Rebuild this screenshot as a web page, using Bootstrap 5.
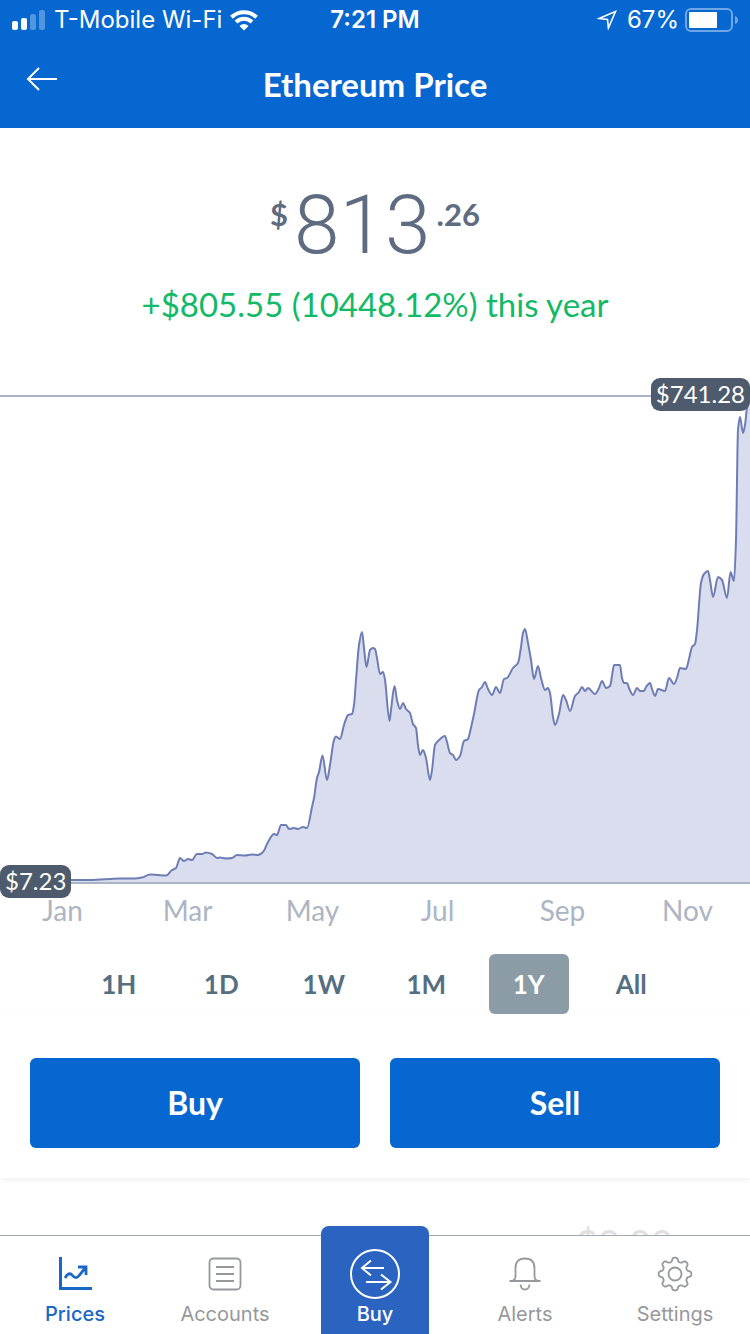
<!DOCTYPE html>
<html lang="en">
<head>
<meta charset="utf-8">
<meta name="viewport" content="width=device-width, initial-scale=1">
<title>Ethereum Price</title>
<link href="https://cdn.jsdelivr.net/npm/bootstrap@5.3.0/dist/css/bootstrap.min.css" rel="stylesheet">
<style>
  :root { --brand: #0667d0; --slate: #4e5b6c; --rule: #a9b4c6; }
  body { font-family: Lato, "Liberation Sans", sans-serif; background: #fff; }
  .ui-font { font-family: Inter, "Liberation Sans", sans-serif; }
  .app-header { background: var(--brand); color: #fff; }
  .status-bar { height: 40px; padding: 0 12px; font-size: 24px; line-height: 40px; }
  .status-side { flex: 1 1 0; gap: 8px; white-space: nowrap; }
  .status-right { gap: 6px; }
  .title-bar { height: 88px; padding: 0 24px; }
  .title-side { flex: 1 1 0; }
  .back-btn { color: #fff; width: 36px; height: 36px; margin-bottom: 10px; }
  .title-bar h1 { font-size: 33px; line-height: 40px; font-weight: 700; }
  .scroller { min-height: 0; overflow-y: auto; scrollbar-width: none; }
  .scroller::-webkit-scrollbar { display: none; }
  .quote { padding-top: 56px; color: #5f6b80; }
  .quote-row { gap: 6px; height: 84px; }
  .quote-main { font-family: Roboto, Lato, sans-serif; font-size: 82px; line-height: 82px; font-weight: 300; }
  .quote-minor { font-size: 31px; line-height: 60px; font-weight: 700; }
  .change { color: #12b966; font-size: 33px; line-height: 40px; margin-top: 16px; }
  .chart { margin-top: 71px; }
  .chart svg { width: 100%; height: 489px; }
  .price-tag { position: absolute; background: var(--slate); color: #fff; font-size: 24px; line-height: 31px; padding: 0 5px 2px; border-radius: 9px; }
  .tag-high { right: 0; top: -17px; }
  .tag-low { left: 0; bottom: -14px; }
  .months { color: #acb5c3; font-size: 28px; line-height: 40px; margin-top: 6px; }
  .ranges { gap: 23px; padding: 24px 79px 0; }
  .ranges .btn { --bs-btn-padding-x: 0; --bs-btn-padding-y: 10px; --bs-btn-color: #566f80; --bs-btn-active-bg: #8b9ca7; --bs-btn-active-color: #fff; --bs-btn-border-width: 0; --bs-btn-border-radius: 6px; font-size: 26px; line-height: 40px; font-weight: 700; flex: 1 1 0; }
  .trade { gap: 30px; padding: 44px 30px 30px; box-shadow: 0 2px 5px rgba(0,0,0,.06); }
  .trade .btn { --bs-btn-bg: var(--brand); --bs-btn-hover-bg: #0559b5; --bs-btn-color: #fff; --bs-btn-hover-color: #fff; --bs-btn-border-width: 0; --bs-btn-border-radius: 6px; --bs-btn-padding-y: 24px; font-size: 32px; line-height: 42px; font-weight: 700; }
  .balance { color: #e0e0e2; font-size: 38px; line-height: 46px; padding: 42px 77px 0; }
  .tabs { border-top: 1px solid #a5acb1; background: #fff; height: 99px; }
  .tabs a { flex: 1 1 0; color: #96989b; font-size: 20px; line-height: 26px; padding-top: 20px; gap: 9px; }
  .tabs a.current { color: #1a67c4; font-weight: 500; }
  .tabs .tab-trade { flex: 0 0 108px; margin: -10px 21px 0; padding-top: 23px; gap: 2px; color: #fff; background: #2b63c1; border-radius: 8px 8px 0 0; font-weight: 500; }
</style>
</head>
<body class="vh-100 d-flex flex-column overflow-hidden">

<header class="app-header flex-shrink-0">
  <div class="status-bar ui-font d-flex align-items-center">
    <div class="status-side d-flex align-items-center">
      <svg width="34" height="20" viewBox="0 0 34 20" fill="#fff" aria-hidden="true">
        <rect x="0" y="11" width="6" height="9" rx="2"/><rect x="9" y="8" width="6" height="12" rx="2"/>
        <rect x="18" y="4" width="6" height="16" rx="2" opacity=".3"/><rect x="27" y="0" width="6" height="20" rx="2" opacity=".3"/>
      </svg>
      <span>T-Mobile Wi-Fi</span>
      <svg width="28" height="21" viewBox="0 0 28 21" fill="none" stroke="#fff" stroke-width="4" aria-hidden="true">
        <path d="M1.500 7.300a18 18 0 0 1 25 0M6 12a11.500 11.500 0 0 1 16 0"/><path d="M14 20.500l-4.500-4.600a6.500 6.500 0 0 1 9 0z" fill="#fff" stroke="none"/>
      </svg>
    </div>
    <time class="fw-semibold">7:21 PM</time>
    <div class="status-side status-right d-flex align-items-center justify-content-end">
      <svg width="20" height="20" viewBox="0 0 20 20" fill="none" stroke="#fff" stroke-width="1.600" aria-hidden="true"><path d="M18.500 1.500L2 8.500l8.500.9.900 8.600z"/></svg>
      <span class="ms-1">67%</span>
      <svg width="53" height="24" viewBox="0 0 53 24" fill="none" aria-hidden="true">
        <rect x="1" y="1" width="46" height="22" rx="5" stroke="#6ea6e6" stroke-width="2"/><rect x="4" y="4" width="28" height="16" rx="1" fill="#fff"/><path d="M50 8v8q3-1 3-4t-3-4" fill="#6ea6e6"/>
      </svg>
    </div>
  </div>
  <div class="title-bar d-flex align-items-center">
    <div class="title-side">
      <button type="button" class="back-btn btn p-0 border-0 d-flex align-items-center" aria-label="Back">
        <svg width="36" height="26" viewBox="0 0 36 26" fill="none" stroke="currentColor" stroke-width="2"><path d="M33 13H4M15 2L4 13l11 11"/></svg>
      </button>
    </div>
    <h1 class="mb-0">Ethereum Price</h1>
    <div class="title-side"></div>
  </div>
</header>

<main class="scroller flex-grow-1">
  <section class="quote text-center">
    <div class="quote-row d-flex justify-content-center align-items-start">
      <span class="quote-minor">$</span><span class="quote-main">813</span><span class="quote-minor">.26</span>
    </div>
    <p class="change mb-0">+$805.55 (10448.12%) this year</p>
  </section>

  <section class="chart position-relative">
    <svg class="d-block" viewBox="0 395 750 489" preserveAspectRatio="none" role="img" aria-label="Price over one year">
      <path id="area" fill="#dadded"/>
      <path id="line" fill="none" stroke="#6f7db5" stroke-width="2" stroke-linejoin="round" vector-effect="non-scaling-stroke"/>
      <path d="M0 396H750M0 883H750" stroke="#a9b4c6" stroke-width="2"/>
    </svg>
    <span class="price-tag tag-high">$741.28</span>
    <span class="price-tag tag-low">$7.23</span>
  </section>
  <div class="months row row-cols-6 g-0 text-center">
    <span class="col">Jan</span><span class="col">Mar</span><span class="col">May</span><span class="col">Jul</span><span class="col">Sep</span><span class="col">Nov</span>
  </div>

  <div class="ranges d-flex" role="group" aria-label="Range">
    <button type="button" class="btn">1H</button>
    <button type="button" class="btn">1D</button>
    <button type="button" class="btn">1W</button>
    <button type="button" class="btn">1M</button>
    <button type="button" class="btn active" aria-pressed="true">1Y</button>
    <button type="button" class="btn">All</button>
  </div>
  <div class="trade d-flex">
    <button type="button" class="btn flex-fill w-50">Buy</button>
    <button type="button" class="btn flex-fill w-50">Sell</button>
  </div>
  <p class="balance text-end mb-0">$0.00</p>
</main>

<nav class="tabs ui-font d-flex flex-shrink-0 position-relative">
  <a href="#prices" class="current d-flex flex-column align-items-center text-decoration-none" aria-current="page">
    <svg width="36" height="36" viewBox="0 0 36 36" fill="none" stroke="currentColor" stroke-width="3" aria-hidden="true"><path d="M3.500 1v31.500H35"/><path d="M8 22q4-7 7.500-2.500t7-.500l6.500-8M21 11h8v8" stroke-width="2.800"/></svg>
    <span>Prices</span>
  </a>
  <a href="#accounts" class="d-flex flex-column align-items-center text-decoration-none">
    <svg width="36" height="36" viewBox="0 0 36 36" fill="none" stroke="currentColor" stroke-width="1.800" aria-hidden="true"><rect x="2.500" y="2.500" width="31" height="31" rx="4"/><path d="M9 11h18M9 18h18M9 25h18"/></svg>
    <span>Accounts</span>
  </a>
  <a href="#trade" class="tab-trade d-flex flex-column align-items-center text-decoration-none">
    <svg width="50" height="50" viewBox="0 0 50 50" fill="none" stroke="currentColor" stroke-width="2" aria-hidden="true"><circle cx="25" cy="25" r="24"/><path d="M34 19H12M21 11.500L12 19l9 7.500M16 33h24M31 25.500l9.500 7.500L31 40.500"/></svg>
    <span>Buy</span>
  </a>
  <a href="#alerts" class="d-flex flex-column align-items-center text-decoration-none">
    <svg width="36" height="36" viewBox="0 0 36 36" fill="none" stroke="currentColor" stroke-width="1.800" aria-hidden="true"><path d="M2.500 25H33.500M5 25q3.500-1 3.500-5v-8q0-9.500 9.500-9.500t9.500 9.500v8q0 4 3.500 5M13.500 28.500q.5 5 4.500 5t4.500-5"/></svg>
    <span>Alerts</span>
  </a>
  <a href="#settings" class="d-flex flex-column align-items-center text-decoration-none">
    <svg width="36" height="36" viewBox="0 0 36 36" fill="none" stroke="currentColor" stroke-width="1.800" stroke-linejoin="round" aria-hidden="true"><path id="gear"/><circle cx="18" cy="18" r="6.500"/></svg>
    <span>Settings</span>
  </a>
</nav>

<script src="https://cdn.jsdelivr.net/npm/bootstrap@5.3.0/dist/js/bootstrap.bundle.min.js"></script>
<script>
  // Chart samples as x,y pairs in the units of the chart's viewBox.
  const pts = `0,880 71,880 90,880 100,879.500 110,879 120,878.500 135,878.500 142,877.500 150,874.500 158,875 166,875.500 172,870 176,868 180,858 184,861 188,859 192,860 197,854 202,854 206,852.500 212,854 217,858 220,857.500 226,858.500 232,858 237,855 245,855.500 252,854.500 258,855 263,852 268,842 274,834 277,835 281,825 286,825 289,829 294,828 298,829 303,827 307,828 312,807 314,798 317,778 319,772 322.500,755.500 327,780 330,765 334,740 336,736.500 340,739 344,725 348,715 352,714 354,705 356,680 359,645 362,632 364,648 366.500,667 370,650 373,648 375,649 377,658 380,674 383,672 385,680 389.500,721 391,710 394.500,686 397,700 400,709 403,703 406,709 410,713 413,724 416,728 418,745 420,755 423,750 426,758 430,780 432,770 435,745 438,741 445,736 447,742 450,753 453,755 456,760 460,756 464,741 468,739 470,732 474,714 479,690 482,687 485,682 488,689 492,695 496,687 500,693 504,679 507,678 513,668 518,663 521,647 523,633 525,629 528,643 531,660 534,679 538,666 541,678 545,690 548,688 550,693 553,717 555,725 559,714 563,695 566,700 570,711 575,696 579,692 582,687 585,691 588,688 595,694 599,688 602,681 606,688 610,686 612,676 614,665 620,665 622,678 624,683 627,683 629,688 633,695 637,688 640,691 644,691 646,687 650,683 652,689 655,696 658,689 665,691 669,678 674,684 677,678 680,668 686,669 689,659 692,647 695,644 697,630 701,583 704,574 708,571 710,580 713,597 718,577 722,580 727,598 730.500,572 734,581 736,540 738,430 740,417 743,433 745,425 747,408 750,400`
    .split(' ').map(p => p.split(',').map(Number));

  // Monotone cubic interpolation: smooth, without overshoot at the peaks.
  const slope = i => (pts[i + 1][1] - pts[i][1]) / (pts[i + 1][0] - pts[i][0]);
  const tangent = pts.map((p, i) => {
    if (i === 0 || i === pts.length - 1) return 0;
    const a = slope(i - 1), b = slope(i);
    return a * b <= 0 ? 0 : 2 * a * b / (a + b);
  });
  let d = 'M' + pts[0];
  for (let i = 0; i < pts.length - 1; i++) {
    const [x0, y0] = pts[i], [x1, y1] = pts[i + 1], h = (x1 - x0) / 3;
    d += `C${x0 + h},${y0 + tangent[i] * h} ${x1 - h},${y1 - tangent[i + 1] * h} ${x1},${y1}`;
  }
  document.getElementById('line').setAttribute('d', d);
  document.getElementById('area').setAttribute('d', d + 'V883H0Z');

  // Eight rounded teeth around the hub of the settings icon.
  let g = '';
  for (let i = 0; i < 160; i++) {
    const t = i / 160 * 2 * Math.PI, r = 14.500 + 1.900 * Math.tanh(2 * Math.cos(8 * t));
    g += (i ? 'L' : 'M') + (18 + r * Math.sin(t)).toFixed(2) + ' ' + (18 - r * Math.cos(t)).toFixed(2);
  }
  document.getElementById('gear').setAttribute('d', g + 'Z');
</script>
</body>
</html>
